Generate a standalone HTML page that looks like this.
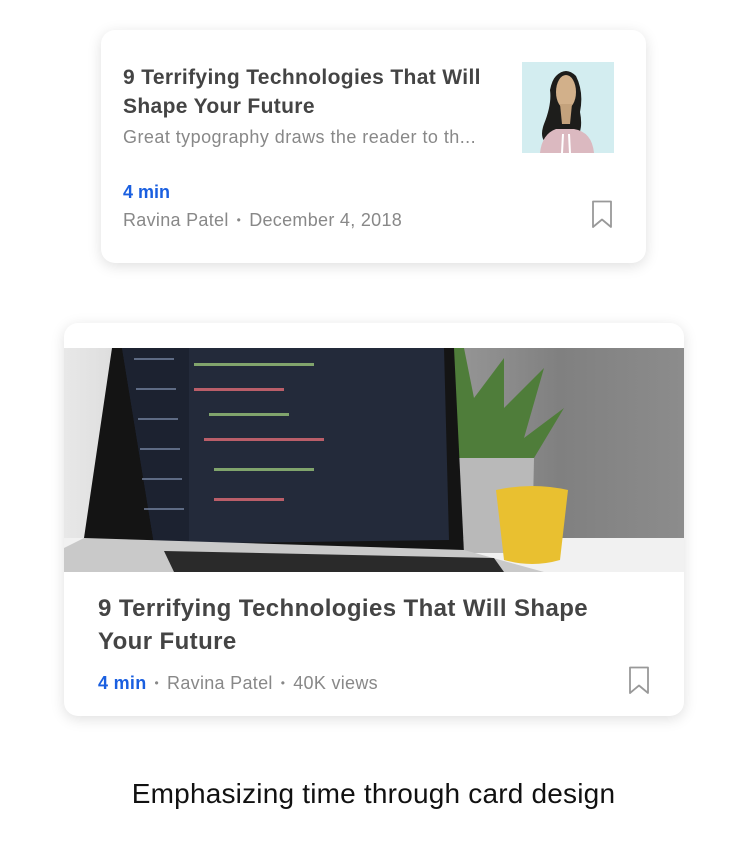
<!DOCTYPE html>
<html><head><style>
body{margin:0;width:747px;height:848px;background:#fff;position:relative;font-family:"Liberation Sans",sans-serif;overflow:hidden}
.card{position:absolute;background:#fff;border-radius:14px;box-shadow:0 3px 14px rgba(0,0,0,0.13)}
.t{position:absolute;color:#444;font-weight:bold;white-space:nowrap}
.g{position:absolute;color:#888;white-space:nowrap}
.b{position:absolute;color:#1a5fe0;font-weight:bold;white-space:nowrap}
.dot{margin:0 8px;font-size:12px;vertical-align:2px}
</style></head><body>
<div class="card" style="left:101px;top:30px;width:545px;height:233px">
 <div class="t" style="left:22px;top:33px;font-size:21px;line-height:29px;letter-spacing:0.35px">9 Terrifying Technologies That Will<br>Shape Your Future</div>
 <div class="g" style="left:22px;top:97px;font-size:18px;letter-spacing:0.45px">Great typography draws the reader to th...</div>
 <div class="b" style="left:22px;top:152px;font-size:18px">4 min</div>
 <div class="g" style="left:22px;top:180px;font-size:18px;letter-spacing:0.3px">Ravina Patel<span class="dot">•</span>December 4, 2018</div>
 <svg style="position:absolute;left:421px;top:32px" width="92" height="91" viewBox="0 0 92 91">
  <rect width="92" height="91" fill="#d3edf0"/>
  <path d="M34 14 Q44 4 54 14 Q62 30 58 50 Q62 70 52 80 L28 84 Q16 78 22 62 Q30 42 28 28 Q30 18 34 14Z" fill="#1d1d1b"/>
  <path d="M18 91 Q20 72 34 67 L52 67 Q70 70 72 91Z" fill="#dbb9c0"/>
  <ellipse cx="44" cy="30" rx="10" ry="17" fill="#d2b08a"/>
  <path d="M38 42 L50 42 L48 62 L40 62Z" fill="#c4a27c"/>
  <path d="M41 72 L40 91 M47 72 L48 91" stroke="#fff" stroke-width="2"/>
 </svg>
 <svg style="position:absolute;left:490px;top:170px" width="22" height="29" viewBox="0 0 22 29"><path d="M2 1.5 H20 V27 L11 19.5 L2 27Z" fill="none" stroke="#999" stroke-width="1.8" stroke-linejoin="round"/></svg>
</div>

<div class="card" style="left:64px;top:323px;width:620px;height:393px;overflow:hidden">
 <svg style="position:absolute;left:0;top:25px" width="620" height="224" viewBox="0 0 620 224">
  <defs><linearGradient id="bg" x1="0" x2="1"><stop offset="0" stop-color="#e8e8e8"/><stop offset="0.6" stop-color="#9a9a9a"/><stop offset="0.8" stop-color="#808080"/><stop offset="1" stop-color="#8c8c8c"/></linearGradient></defs>
  <rect width="620" height="224" fill="url(#bg)"/>
  <rect y="190" width="620" height="34" fill="#f1f1f1"/>
  <path d="M380 0 L400 0 L410 50 L440 10 L440 60 L480 20 L460 90 L500 60 L470 110 L390 110 Z" fill="#4f7d3a"/>
  <path d="M395 110 L470 110 L468 205 L400 205Z" fill="#b9b9b9"/>
  <path d="M432 142 Q468 134 504 142 L496 212 Q468 220 440 212Z" fill="#e9c030"/>
  <path d="M48 0 L390 0 L400 205 L80 207 L20 190Z" fill="#141414"/>
  <path d="M58 0 L380 0 L385 192 L90 196 Z" fill="#232a3a"/>
  <path d="M58 0 L125 0 L125 194 L90 196Z" fill="#1c2230"/>
  <g fill="#e06c75" opacity="0.8"><rect x="130" y="40" width="90" height="3"/><rect x="140" y="90" width="120" height="3"/><rect x="150" y="150" width="70" height="3"/></g>
  <g fill="#98c379" opacity="0.8"><rect x="130" y="15" width="120" height="3"/><rect x="145" y="65" width="80" height="3"/><rect x="150" y="120" width="100" height="3"/></g>
  <g fill="#7a8aa8" opacity="0.7"><rect x="70" y="10" width="40" height="2"/><rect x="72" y="40" width="40" height="2"/><rect x="74" y="70" width="40" height="2"/><rect x="76" y="100" width="40" height="2"/><rect x="78" y="130" width="40" height="2"/><rect x="80" y="160" width="40" height="2"/></g>
  <path d="M20 190 L400 202 L480 224 L0 224 L0 200Z" fill="#c9c9c9"/>
  <path d="M100 203 L430 210 L440 224 L110 224Z" fill="#2a2a2a"/>
 </svg>
 <div class="t" style="left:34px;top:269px;font-size:24px;line-height:33px;letter-spacing:0.4px">9 Terrifying Technologies That Will Shape<br>Your Future</div>
 <div class="g" style="left:34px;top:350px;font-size:18px;letter-spacing:0.3px"><span style="color:#1a5fe0;font-weight:bold">4 min</span><span class="dot">•</span>Ravina Patel<span class="dot">•</span>40K views</div>
 <svg style="position:absolute;left:564px;top:343px" width="22" height="29" viewBox="0 0 22 29"><path d="M2 1.5 H20 V27 L11 19.5 L2 27Z" fill="none" stroke="#999" stroke-width="1.8" stroke-linejoin="round"/></svg>
</div>

<div style="position:absolute;left:0;width:747px;top:778px;text-align:center;font-size:28px;color:#111;letter-spacing:0.2px">Emphasizing time through card design</div>
</body></html>
